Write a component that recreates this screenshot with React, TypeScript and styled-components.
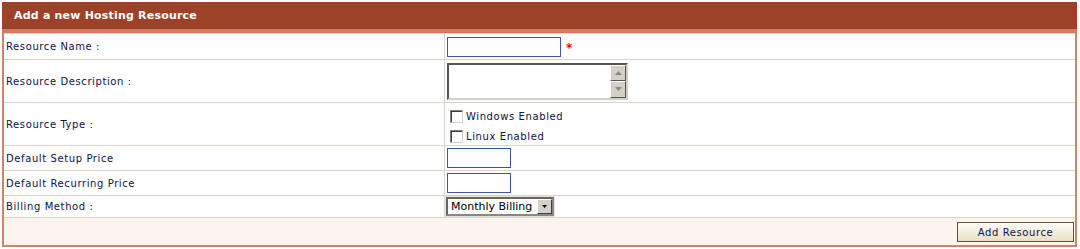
import React from "react";
import styled, { createGlobalStyle } from "styled-components";

const Global = createGlobalStyle`
  html, body { margin: 0; padding: 0; background: #ffffff; }
  body { font-family: "DejaVu Sans", Verdana, sans-serif; }
`;

const Panel = styled.div`
  margin: 2px 3px 0 2px;
  width: 1075px;
  box-sizing: border-box;
  border: 2px solid #c9866e;
  border-top: none;
  background: #ffffff;
`;

const Header = styled.div`
  height: 27px;
  margin: 0 -2px;
  background: #9d4229;
  border-bottom: 4px solid #d47a62;
  display: flex;
  align-items: center;
  padding-left: 12px;
  color: #ffffff;
  font-weight: bold;
  font-size: 11px;
  letter-spacing: 0.2px;
`;

const Table = styled.table`
  width: 100%;
  border-collapse: collapse;
  table-layout: fixed;
`;

const Row = styled.tr<{ $h: number }>`
  height: ${(p) => p.$h}px;
`;

const Label = styled.td`
  width: 438px;
  padding: 0 0 0 2px;
  border: 1px solid #ddd4c4;
  border-left: none;
  font-size: 10px;
  color: #10104a;
  letter-spacing: 0.6px;
  vertical-align: middle;
`;

const Field = styled.td`
  padding: 0 0 0 2px;
  border: 1px solid #ddd4c4;
  border-right: none;
  vertical-align: middle;
`;

const TextInput = styled.input<{ $w: number }>`
  width: ${(p) => p.$w}px;
  height: 20px;
  box-sizing: border-box;
  border: 1px solid #3b56a8;
  outline: 1px solid #ffffff;
  padding: 0;
  margin: 0;
  display: block;
  background: #fff;
`;

const Inline = styled.div`
  display: flex;
  align-items: center;
  gap: 5px;
`;

const Star = styled.span`
  color: #ff0000;
  font-size: 12px;
  font-weight: bold;
  line-height: 1;
  margin-top: 2px;
`;

const TextAreaBox = styled.div`
  width: 181px;
  height: 37px;
  box-sizing: border-box;
  border: 2px solid;
  border-color: #555555 #d4d0c8 #d4d0c8 #555555;
  background: #fff;
  display: flex;
  justify-content: flex-end;
`;

const ScrollCol = styled.div`
  width: 16px;
  display: flex;
  flex-direction: column;
`;

const ScrollBtn = styled.div`
  flex: 1;
  box-sizing: border-box;
  background: #d4d0c8;
  border: 1px solid;
  border-color: #ffffff #555555 #555555 #ffffff;
  display: flex;
  align-items: center;
  justify-content: center;
`;

const Checks = styled.div`
  display: flex;
  flex-direction: column;
  gap: 7px;
  padding: 4px 0 0 3px;
`;

const CheckLine = styled.label`
  display: flex;
  align-items: center;
  gap: 3px;
  font-size: 10px;
  color: #10104a;
  letter-spacing: 0.6px;
`;

const Box = styled.span`
  width: 13px;
  height: 13px;
  box-sizing: border-box;
  border: 1px solid;
  border-color: #808080 #d4d0c8 #d4d0c8 #808080;
  box-shadow: inset 1px 1px 0 #404040;
  background: #fff;
  display: inline-block;
`;

const Select = styled.div`
  width: 108px;
  height: 19px;
  box-sizing: border-box;
  border: 2px solid;
  border-color: #666 #888 #888 #666;
  outline: 1px solid #e4e4e4;
  background: #fff;
  display: flex;
  align-items: center;
  justify-content: space-between;
  font-size: 11px;
  color: #000;
  padding-left: 3px;
  margin-left: -1px;
`;

const SelectBtn = styled.span`
  width: 15px;
  height: 15px;
  box-sizing: border-box;
  background: #d4d0c8;
  border: 1px solid;
  border-color: #ffffff #404040 #404040 #ffffff;
  display: flex;
  align-items: center;
  justify-content: center;
`;

const Footer = styled.div`
  height: 27px;
  background: #fdf4ee;
  display: flex;
  align-items: center;
  justify-content: flex-end;
  padding-right: 1px;
`;

const Button = styled.button`
  width: 117px;
  height: 20px;
  box-sizing: border-box;
  border: 1px solid #5c5340;
  background: linear-gradient(#fefdf8, #e9e0c2);
  font-family: "DejaVu Sans", Verdana, sans-serif;
  font-size: 10px;
  letter-spacing: 0.6px;
  color: #10104a;
  padding: 0;
  margin-top: 1px;
`;

const Tri = ({ up }: { up?: boolean }) => (
  <svg width="7" height="4" viewBox="0 0 7 4">
    <polygon points={up ? "3.5,0 7,4 0,4" : "0,0 7,0 3.5,4"} fill="#888" />
  </svg>
);

export default function App() {
  return (
    <>
      <Global />
      <Panel>
        <Header>Add a new Hosting Resource</Header>
        <Table>
          <tbody>
            <Row $h={26}>
              <Label>Resource Name :</Label>
              <Field>
                <Inline>
                  <TextInput $w={114} />
                  <Star>*</Star>
                </Inline>
              </Field>
            </Row>
            <Row $h={43}>
              <Label>Resource Description :</Label>
              <Field>
                <TextAreaBox>
                  <ScrollCol>
                    <ScrollBtn>
                      <Tri up />
                    </ScrollBtn>
                    <ScrollBtn>
                      <Tri />
                    </ScrollBtn>
                  </ScrollCol>
                </TextAreaBox>
              </Field>
            </Row>
            <Row $h={43}>
              <Label>Resource Type :</Label>
              <Field>
                <Checks>
                  <CheckLine>
                    <Box /> Windows Enabled
                  </CheckLine>
                  <CheckLine>
                    <Box /> Linux Enabled
                  </CheckLine>
                </Checks>
              </Field>
            </Row>
            <Row $h={25}>
              <Label>Default Setup Price</Label>
              <Field>
                <TextInput $w={64} />
              </Field>
            </Row>
            <Row $h={25}>
              <Label>Default Recurring Price</Label>
              <Field>
                <TextInput $w={64} />
              </Field>
            </Row>
            <Row $h={22}>
              <Label>Billing Method :</Label>
              <Field>
                <Select>
                  Monthly Billing
                  <SelectBtn>
                    <svg width="5" height="3" viewBox="0 0 5 3">
                      <polygon points="0,0 5,0 2.5,3" fill="#000" />
                    </svg>
                  </SelectBtn>
                </Select>
              </Field>
            </Row>
          </tbody>
        </Table>
        <Footer>
          <Button>Add Resource</Button>
        </Footer>
      </Panel>
    </>
  );
}
